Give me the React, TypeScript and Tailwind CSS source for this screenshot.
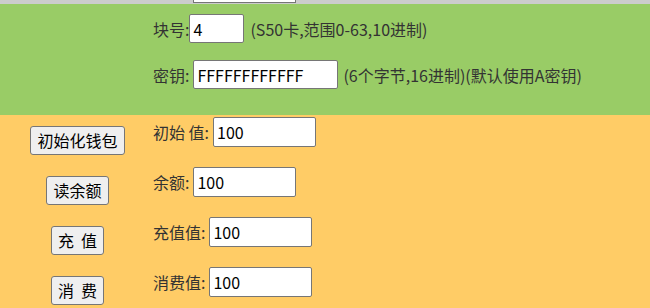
const font = "font-['Microsoft_YaHei','Noto_Sans_CJK_SC',sans-serif]";

const Field = ({ className, value }: { className: string; value: string }) => (
  <input
    defaultValue={value}
    className={`${className} border border-[#767676] rounded-[2px] bg-white px-[3px] text-[16px] text-black outline-none`}
  />
);

const Btn = ({ children }: { children: React.ReactNode }) => (
  <button className="h-[29px] px-[6px] border border-[#767676] rounded-[3px] bg-[#efefef] text-[16px] text-black leading-none whitespace-pre">
    {children}
  </button>
);

const rows = [
  { btn: "初始化钱包", label: "初始 值:", value: "100" },
  { btn: "读余额", label: "余额:", value: "100" },
  { btn: "充  值", label: "充值值:", value: "100" },
  { btn: "消  费", label: "消费值:", value: "100" },
];

export default function App() {
  return (
    <div className={`${font} text-[16px] text-[#333] w-[650px] h-[308px] overflow-hidden bg-[#ffcc66]`}>
      <div className="h-[4px] bg-[#cccccc] pl-[193px]">
        <div className="w-[103px] h-[3px] bg-white border-x border-b border-[#767676]" />
      </div>

      <div className="bg-[#99cc66] pl-[153px] pt-[10px] pb-[26px] flex flex-col gap-[17px]">
        <div className="flex items-center h-[29px]">
          <span>块号:</span>
          <Field className="w-[55px] h-[29px]" value="4" />
          <span className="ml-[6px]">(S50卡,范围0-63,10进制)</span>
        </div>
        <div className="flex items-center h-[29px]">
          <span>密钥:</span>
          <Field className="ml-[4px] w-[145px] h-[29px]" value="FFFFFFFFFFFF" />
          <span className="ml-[5px]">(6个字节,16进制)(默认使用A密钥)</span>
        </div>
      </div>

      <div className="grid grid-cols-[152px_1fr]">
        {rows.map((r) => (
          <div key={r.label} className="contents">
            <div className="h-[50px] flex items-center justify-center pl-[3px]">
              <Btn>{r.btn}</Btn>
            </div>
            <div className="h-[50px] pl-[1px] pt-[2px] flex items-start">
              <div className="flex items-center h-[30px] gap-[4px]">
                <span className="whitespace-pre">{r.label}</span>
                <Field className="w-[103px] h-[30px]" value={r.value} />
              </div>
            </div>
          </div>
        ))}
      </div>
    </div>
  );
}
